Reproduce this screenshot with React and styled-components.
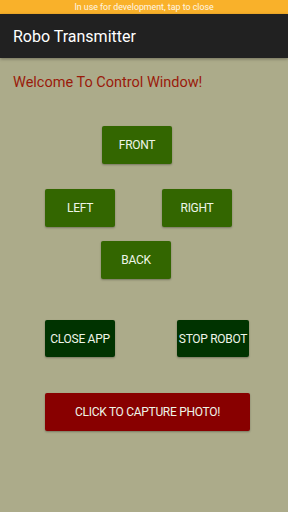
import React from "react";
import styled, { createGlobalStyle } from "styled-components";

const Global = createGlobalStyle`
  html, body { margin: 0; padding: 0; }
  body { width: 288px; height: 512px; overflow: hidden; background: #acab8a; font-family: Roboto, "Noto Sans", sans-serif; }
`;

const Screen = styled.div`
  width: 288px;
  height: 512px;
  display: flex;
  flex-direction: column;
  background: #acab8a;
`;

const StatusBar = styled.div`
  height: 14px;
  background: #f9b12a;
  color: #fff7e6;
  font-size: 8.8px;
  line-height: 14px;
  text-align: center;
`;

const AppBar = styled.div`
  height: 44px;
  background: #212121;
  color: #ffffff;
  display: flex;
  align-items: center;
  padding-left: 13px;
  font-size: 16px;
  box-shadow: 0 1px 3px rgba(0,0,0,0.35);
  position: relative;
  z-index: 1;
`;

const Welcome = styled.div`
  color: #9a1a0a;
  font-size: 14.5px;
  margin: 15px 0 0 13px;
  line-height: 20px;
`;

const Controls = styled.div`
  display: flex;
  flex-direction: column;
  width: 205px;
  margin: 33px 0 0 45px;
`;

const Row = styled.div`
  display: flex;
  margin-top: ${(p) => p.$top || 0}px;
`;

const Button = styled.button`
  border: none;
  border-radius: 2px;
  margin: 0 0 0 ${(p) => p.$left || 0}px;
  padding: 0;
  width: ${(p) => p.$w || 70}px;
  height: ${(p) => p.$h || 38}px;
  background: ${(p) => p.$bg || "#336600"};
  color: #eef5e8;
  font-family: Roboto, "Noto Sans", sans-serif;
  font-size: 12px;
  font-weight: 400;
  letter-spacing: -0.3px;
  text-transform: uppercase;
  box-shadow: 0 1px 2px rgba(0,0,0,0.3);
`;

export default function App() {
  return (
    <>
      <Global />
      <Screen>
        <StatusBar>In use for development, tap to close</StatusBar>
        <AppBar>Robo Transmitter</AppBar>
        <Welcome>Welcome To Control Window!</Welcome>
        <Controls>
          <Row>
            <Button $left={57}>FRONT</Button>
          </Row>
          <Row $top={25}>
            <Button>LEFT</Button>
            <Button $left={47}>RIGHT</Button>
          </Row>
          <Row $top={14}>
            <Button $left={56}>BACK</Button>
          </Row>
          <Row $top={41}>
            <Button $bg="#003300" $h={37}>CLOSE APP</Button>
            <Button $bg="#003300" $h={37} $w={72} $left={62}>STOP ROBOT</Button>
          </Row>
          <Row $top={36}>
            <Button $bg="#880000" $w={205}>CLICK TO CAPTURE PHOTO!</Button>
          </Row>
        </Controls>
      </Screen>
    </>
  );
}
